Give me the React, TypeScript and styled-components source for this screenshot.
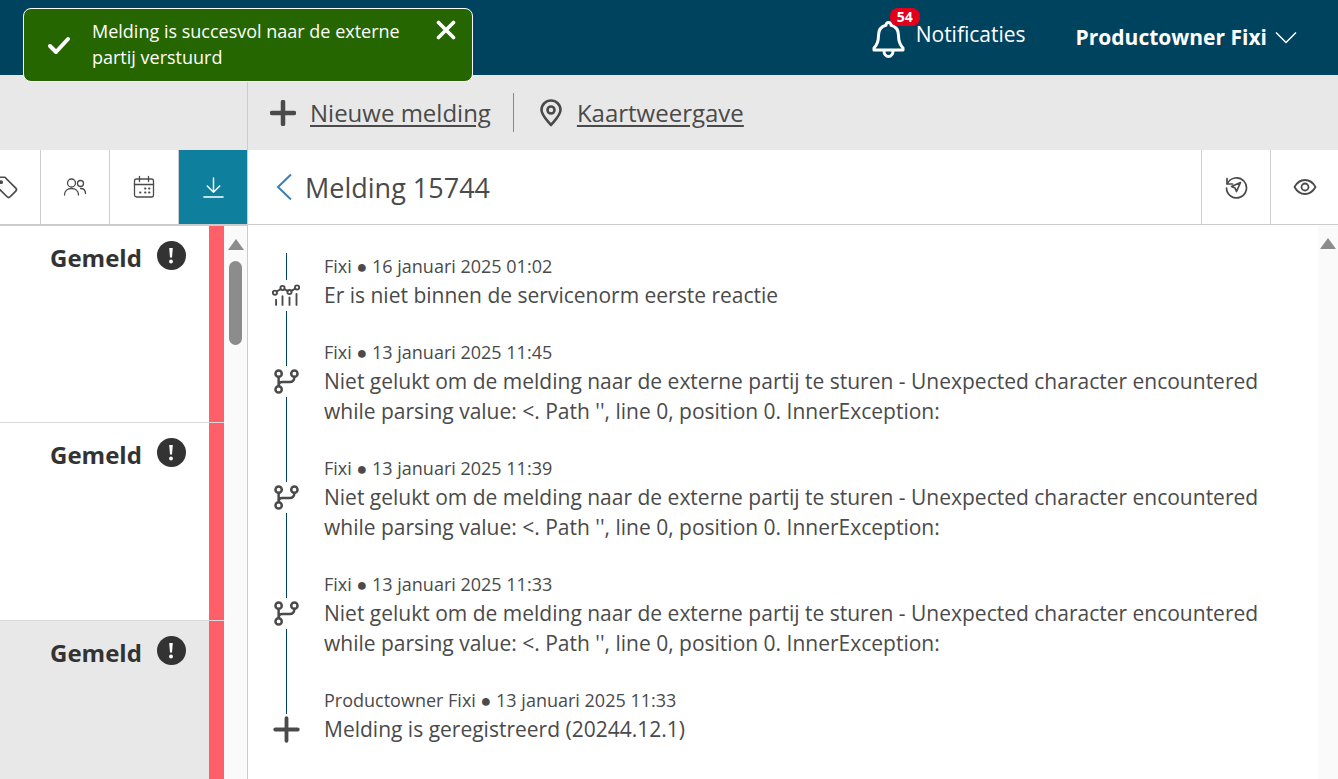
import styled, { createGlobalStyle } from "styled-components";

const GlobalStyle = createGlobalStyle`
  html, body {
    margin: 0;
    height: 100%;
    overflow: hidden;
    background: #fff;
    font-family: "Open Sans", "Liberation Sans", sans-serif;
    color: #4a4a4a;
  }
  * { box-sizing: border-box; }
`;

const Page = styled.div`
  position: relative;
  display: flex;
  flex-direction: column;
  height: 100vh;
  overflow: hidden;
`;

const Header = styled.header`
  display: flex;
  align-items: center;
  justify-content: flex-end;
  height: 75px;
  flex: none;
  background: #00435f;
  color: #fff;
  padding-right: 41px;
`;

const Notifications = styled.div`
  display: flex;
  align-items: flex-start;
  height: 75px;
  padding-top: 20px;
  margin-right: 50px;
`;

const BellWrap = styled.div`
  position: relative;
  width: 44px;
  height: 40px;
`;

const Badge = styled.span`
  position: absolute;
  left: 18px;
  top: -12px;
  width: 30px;
  height: 18px;
  border-radius: 8px;
  background: #e2001a;
  color: #fff;
  font-size: 14px;
  font-weight: 700;
  line-height: 18px;
  text-align: center;
`;

const NotificationLabel = styled.span`
  font-size: 21px;
  line-height: 28px;
`;

const UserMenu = styled.div`
  display: flex;
  align-items: center;
  gap: 8px;
`;

const UserName = styled.span`
  font-size: 21px;
  font-weight: 700;
  line-height: 28px;
  margin-bottom: 2px;
`;

const Toast = styled.div`
  position: absolute;
  left: 23px;
  top: 8px;
  width: 450px;
  height: 74px;
  display: flex;
  align-items: center;
  background: #266600;
  border: 1px solid #fff;
  border-radius: 8px;
  color: #fff;
`;

const ToastCheck = styled.div`
  width: 68px;
  flex: none;
  display: flex;
  justify-content: center;
  padding-left: 2px;
`;

const ToastText = styled.div`
  flex: 1;
  font-size: 18px;
  line-height: 26px;
  margin-top: -2px;
`;

const ToastClose = styled.div`
  position: absolute;
  right: 16px;
  top: 11px;
  line-height: 0;
`;

const SubBar = styled.div`
  display: flex;
  height: 75px;
  flex: none;
  background: #e8e8e8;
`;

const SubBarSide = styled.div`
  width: 248px;
  flex: none;
  border-right: 1px solid #ccc;
`;

const SubBarActions = styled.div`
  display: flex;
  align-items: center;
  gap: 14px;
  padding-left: 22px;
`;

const ActionLink = styled.a`
  display: flex;
  align-items: center;
  gap: 14px;
  color: #4a4a4a;
  font-size: 24px;
  line-height: 30px;
  text-decoration: underline;
  text-underline-offset: 3px;
`;

const ActionDivider = styled.span`
  width: 1px;
  height: 39px;
  background: #888;
  margin: 0 11px 0 8px;
`;

const Main = styled.div`
  display: flex;
  flex: 1;
  min-height: 0;
`;

const LeftPanel = styled.aside`
  width: 248px;
  flex: none;
  display: flex;
  flex-direction: column;
  border-right: 1px solid #ccc;
`;

const LeftToolbar = styled.div`
  display: flex;
  justify-content: flex-end;
  height: 76px;
  flex: none;
  overflow: hidden;
  border-bottom: 2px solid #ccc;
`;

const ToolButton = styled.div<{ $active?: boolean }>`
  width: ${(p) => (p.$active ? 68 : 69)}px;
  flex: none;
  display: flex;
  align-items: center;
  justify-content: center;
  color: ${(p) => (p.$active ? "#fff" : "#4a4a4a")};
  background: ${(p) => (p.$active ? "#0e7f9c" : "transparent")};
  border-right: ${(p) => (p.$active ? "none" : "1px solid #ccc")};
`;

const ListArea = styled.div`
  flex: 1;
  display: flex;
  min-height: 0;
`;

const List = styled.div`
  flex: 1;
  display: flex;
  flex-direction: column;
  overflow: hidden;
`;

const Row = styled.div<{ $selected?: boolean; $height: number }>`
  height: ${(p) => p.$height}px;
  flex: none;
  display: flex;
  background: ${(p) => (p.$selected ? "#e8e8e8" : "#fff")};
  border-bottom: 1px solid #d9d9d9;
`;

const RowStatus = styled.div`
  flex: 1;
  display: flex;
  align-items: flex-start;
  gap: 15px;
  padding: 15px 0 0 50px;
`;

const StatusLabel = styled.span`
  font-size: 24px;
  font-weight: 700;
  line-height: 34px;
  color: #333;
`;

const StatusIcon = styled.span`
  width: 29px;
  height: 29px;
  border-radius: 50%;
  background: #333;
  display: flex;
  align-items: center;
  justify-content: center;
`;

const Stripe = styled.div`
  width: 15px;
  flex: none;
  background: #ff5f69;
`;

const ScrollTrack = styled.div<{ $width: number }>`
  width: ${(p) => p.$width}px;
  flex: none;
  position: relative;
  background: #fafafa;
`;

const ScrollArrow = styled.div`
  position: absolute;
  top: 13px;
  left: 50%;
  margin-left: -8px;
  width: 0;
  height: 0;
  border-left: 8px solid transparent;
  border-right: 8px solid transparent;
  border-bottom: 11px solid #8c8c8c;
`;

const ScrollThumb = styled.div`
  position: absolute;
  top: 35px;
  left: 5px;
  width: 13px;
  height: 84px;
  border-radius: 7px;
  background: #8c8c8c;
`;

const RightPanel = styled.section`
  flex: 1;
  min-width: 0;
  display: flex;
  flex-direction: column;
`;

const TitleBar = styled.div`
  display: flex;
  align-items: center;
  height: 75px;
  flex: none;
  border-bottom: 1px solid #ccc;
  padding-left: 27px;
`;

const BackIcon = styled.span`
  line-height: 0;
  margin-right: 12px;
`;

const Title = styled.h1`
  flex: 1;
  margin: 2px 0 0;
  font-size: 27px;
  font-weight: 400;
  line-height: 36px;
  color: #4a4a4a;
`;

const TitleTool = styled.div`
  width: 69px;
  align-self: stretch;
  flex: none;
  display: flex;
  align-items: center;
  justify-content: center;
  border-left: 1px solid #ccc;
  color: #4a4a4a;

  &:last-child {
    width: 68px;
  }
`;

const Content = styled.div`
  flex: 1;
  display: flex;
  min-height: 0;
`;

const Timeline = styled.div`
  flex: 1;
  padding: 28.25px 0 0 23px;
`;

const Item = styled.div`
  display: flex;
  gap: 23px;
`;

const Rail = styled.div`
  width: 30px;
  flex: none;
  display: flex;
  flex-direction: column;
  align-items: center;
`;

const RailLine = styled.span<{ $grow?: boolean }>`
  width: 1px;
  background: #00435f;
  height: ${(p) => (p.$grow ? "auto" : "26.75px")};
  flex: ${(p) => (p.$grow ? 1 : "none")};
  margin-top: ${(p) => (p.$grow ? "1px" : 0)};
`;

const RailIcon = styled.span`
  height: 30px;
  flex: none;
  display: flex;
  align-items: center;
  justify-content: center;
  color: #4a4a4a;
`;

const ItemBody = styled.div`
  flex: 1;
  padding-bottom: 29.5px;
`;

const Meta = styled.div`
  font-size: 18px;
  line-height: 26.5px;
`;

const Message = styled.div`
  font-size: 21px;
  line-height: 30px;
  max-width: 950px;
`;

const Icon = ({ size, children, sw = 1.6 }: { size: number; children: React.ReactNode; sw?: number }) => (
  <svg
    width={size}
    height={size}
    viewBox="0 0 24 24"
    fill="none"
    stroke="currentColor"
    strokeWidth={sw}
    strokeLinecap="round"
    strokeLinejoin="round"
  >
    {children}
  </svg>
);

const BranchIcon = () => (
  <Icon size={27} sw={2.2}>
    <circle cx="5" cy="5" r="2.8" />
    <circle cx="19" cy="5" r="2.8" />
    <circle cx="5" cy="19" r="2.8" />
    <path d="M5 8v8M19 8c0 3-2 4.500-4 4.500H8c-2 0-3 1-3 3" />
  </Icon>
);

const TrendIcon = () => (
  <Icon size={28} sw={1.6}>
    <circle cx="2.500" cy="10" r="1.800" />
    <circle cx="9" cy="6" r="1.800" />
    <circle cx="15" cy="9.500" r="1.800" />
    <circle cx="21.500" cy="5.500" r="1.800" />
    <path d="M4 9l3.500-2M10.500 7L13.500 8.500M16.500 8.500L20 6.500M3.500 16v4.500M9 13v7.500M15 14v6.500M21 11v9.500" />
  </Icon>
);

const PlusIcon = () => (
  <Icon size={27} sw={3.4}>
    <path d="M12 2v20M2 12h20" />
  </Icon>
);

const entries = [
  {
    icon: <TrendIcon />,
    meta: "Fixi ● 16 januari 2025 01:02",
    text: "Er is niet binnen de servicenorm eerste reactie",
  },
  {
    icon: <BranchIcon />,
    meta: "Fixi ● 13 januari 2025 11:45",
    text: "Niet gelukt om de melding naar de externe partij te sturen - Unexpected character encountered while parsing value: <. Path '', line 0, position 0. InnerException:",
  },
  {
    icon: <BranchIcon />,
    meta: "Fixi ● 13 januari 2025 11:39",
    text: "Niet gelukt om de melding naar de externe partij te sturen - Unexpected character encountered while parsing value: <. Path '', line 0, position 0. InnerException:",
  },
  {
    icon: <BranchIcon />,
    meta: "Fixi ● 13 januari 2025 11:33",
    text: "Niet gelukt om de melding naar de externe partij te sturen - Unexpected character encountered while parsing value: <. Path '', line 0, position 0. InnerException:",
  },
  {
    icon: <PlusIcon />,
    meta: "Productowner Fixi ● 13 januari 2025 11:33",
    text: "Melding is geregistreerd (20244.12.1)",
  },
];

const rows = [
  { height: 197 },
  { height: 198 },
  { height: 200, selected: true },
];

export default function App() {
  return (
    <Page>
      <GlobalStyle />
      <Header>
        <Notifications>
          <BellWrap>
            <svg width="33" height="39" viewBox="0 0 33 39" fill="none" stroke="#fff" strokeWidth="3" strokeLinejoin="round">
              <path d="M16.500 2.500c1.500 0 2.500 1 2.500 2.800 5 1.200 7.500 5 7.500 10.200 0 6 1 9 4.500 12.500v2H2v-2c3.500-3.500 4.500-6.500 4.500-12.500 0-5.200 2.500-9 7.500-10.200 0-1.800 1-2.800 2.500-2.800z" />
              <path d="M12 31c0 3 2 5.500 4.500 5.500S21 34 21 31" />
            </svg>
            <Badge>54</Badge>
          </BellWrap>
          <NotificationLabel>Notificaties</NotificationLabel>
        </Notifications>
        <UserMenu>
          <UserName>Productowner Fixi</UserName>
          <svg width="22" height="13" viewBox="0 0 22 13" fill="none" stroke="#fff" strokeWidth="1.500">
            <path d="M1 1.500l10 10 10-10" />
          </svg>
        </UserMenu>
      </Header>

      <Toast>
        <ToastCheck>
          <svg width="24" height="20" viewBox="0 0 24 20" fill="none" stroke="#fff" strokeWidth="4" strokeLinecap="round" strokeLinejoin="round">
            <path d="M3 11l6 6L21 4" />
          </svg>
        </ToastCheck>
        <ToastText>
          Melding is succesvol naar de externe
          <br />
          partij verstuurd
        </ToastText>
        <ToastClose>
          <svg width="20" height="20" viewBox="0 0 20 20" fill="none" stroke="#fff" strokeWidth="3.600" strokeLinecap="round">
            <path d="M2.500 2.500l15 15M17.500 2.500l-15 15" />
          </svg>
        </ToastClose>
      </Toast>

      <SubBar>
        <SubBarSide />
        <SubBarActions>
          <svg width="26" height="26" viewBox="0 0 26 26" fill="none" stroke="#4a4a4a" strokeWidth="4.500" strokeLinecap="round">
            <path d="M13 2v22M2 13h22" />
          </svg>
          <ActionLink>Nieuwe melding</ActionLink>
          <ActionDivider />
          <ActionLink>
            <svg width="24" height="28" viewBox="0 0 24 28" fill="none" stroke="#4a4a4a" strokeWidth="2.600">
              <path d="M12 26c-5-6-9.500-10-9.500-15a9.500 9.500 0 0 1 19 0c0 5-4.500 9-9.500 15z" strokeLinejoin="round" />
              <circle cx="12" cy="11" r="3.500" />
            </svg>
            Kaartweergave
          </ActionLink>
        </SubBarActions>
      </SubBar>

      <Main>
        <LeftPanel>
          <LeftToolbar>
            <ToolButton>
              <Icon size={26}>
                <path d="M3 3h8l10 10a2 2 0 0 1 0 2.800l-5.200 5.200a2 2 0 0 1-2.800 0L3 11z" />
                <circle cx="7.500" cy="7.500" r="1" fill="currentColor" />
              </Icon>
            </ToolButton>
            <ToolButton>
              <Icon size={24} sw={1.3}>
                <circle cx="8.500" cy="8" r="4" />
                <circle cx="17.500" cy="8.500" r="3" />
                <path d="M1.500 20c0-4 3-6.500 7-6.500s7 2.500 7 6.500M17.500 13.500c3 0 5 2 5 5" />
              </Icon>
            </ToolButton>
            <ToolButton>
              <Icon size={24} sw={1.3}>
                <rect x="2.500" y="4" width="19" height="18" rx="2" />
                <path d="M2.500 9.500h19M7.500 1.500v5M16.500 1.500v5" />
                <path d="M13 13.500h.5M17 13.500h.5M8 17.500h.5M13 17.500h.5M17 17.500h.5" strokeWidth="1.800" />
              </Icon>
            </ToolButton>
            <ToolButton $active>
              <Icon size={23} sw={1.500}>
                <path d="M12 2v15M5.500 10.500L12 17l6.500-6.500M2 22h20" />
              </Icon>
            </ToolButton>
          </LeftToolbar>
          <ListArea>
            <List>
              {rows.map((row, i) => (
                <Row key={i} $height={row.height} $selected={row.selected}>
                  <RowStatus>
                    <StatusLabel>Gemeld</StatusLabel>
                    <StatusIcon>
                      <svg width="6" height="17" viewBox="0 0 6 17" fill="#fff">
                        <path d="M1.200 1h3.600L4 10.500H2z" />
                        <circle cx="3" cy="14.500" r="1.900" />
                      </svg>
                    </StatusIcon>
                  </RowStatus>
                  <Stripe />
                </Row>
              ))}
            </List>
            <ScrollTrack $width={23}>
              <ScrollArrow />
              <ScrollThumb />
            </ScrollTrack>
          </ListArea>
        </LeftPanel>

        <RightPanel>
          <TitleBar>
            <BackIcon>
              <svg width="18" height="28" viewBox="0 0 18 28" fill="none" stroke="#3c7fb8" strokeWidth="2">
                <path d="M16 1.500L3 14l13 12.500" />
              </svg>
            </BackIcon>
            <Title>Melding 15744</Title>
            <TitleTool>
              <Icon size={24} sw={1.7}>
                <path d="M3.500 8.500A10 10 0 1 1 2.500 13" />
                <path d="M3 3.500v5.500h5.500" />
                <path d="M16.500 7.500l-9 4 3.500 1.500 1.500 3.500z" />
              </Icon>
            </TitleTool>
            <TitleTool>
              <Icon size={24} sw={1.8}>
                <path d="M1.500 12C4 7.500 7.500 5 12 5s8 2.500 10.500 7c-2.500 4.500-6 7-10.500 7S4 16.500 1.500 12z" />
                <circle cx="12" cy="12" r="3.500" />
              </Icon>
            </TitleTool>
          </TitleBar>
          <Content>
            <Timeline>
              {entries.map((entry, i) => (
                <Item key={i}>
                  <Rail>
                    <RailLine />
                    <RailIcon>{entry.icon}</RailIcon>
                    {i < entries.length - 1 && <RailLine $grow />}
                  </Rail>
                  <ItemBody>
                    <Meta>{entry.meta}</Meta>
                    <Message>{entry.text}</Message>
                  </ItemBody>
                </Item>
              ))}
            </Timeline>
            <ScrollTrack $width={20}>
              <ScrollArrow />
            </ScrollTrack>
          </Content>
        </RightPanel>
      </Main>
    </Page>
  );
}
